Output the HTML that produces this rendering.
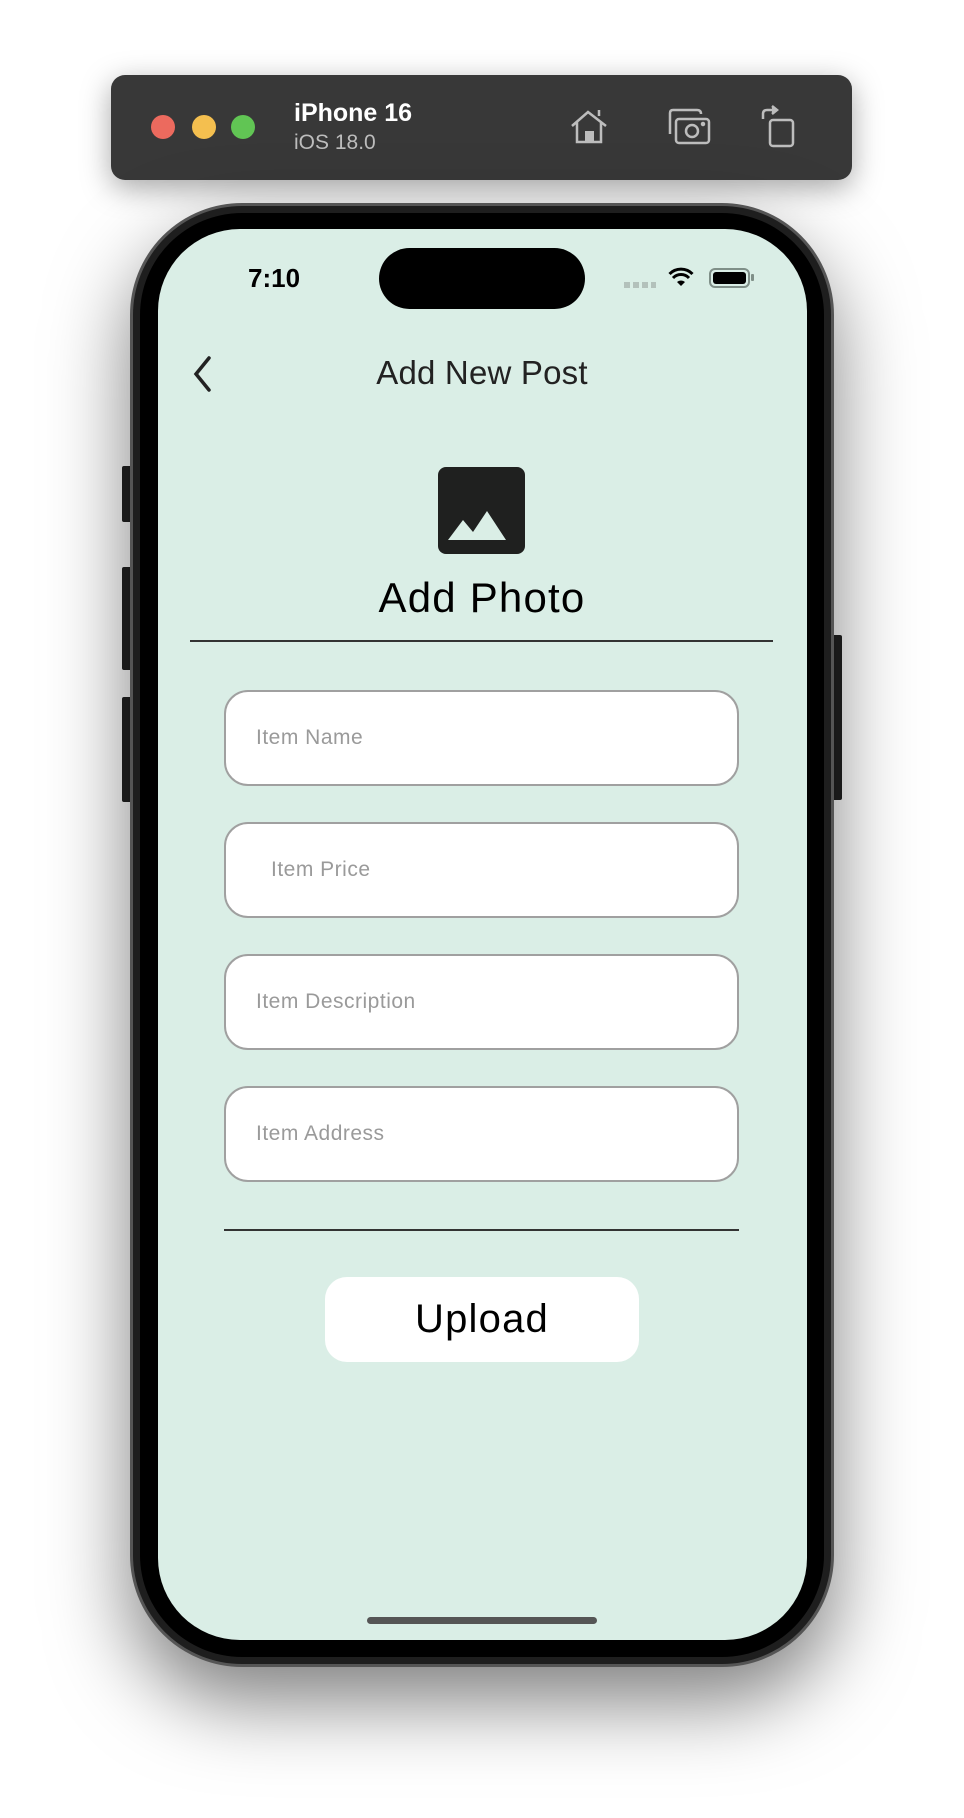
<!DOCTYPE html>
<html><head><meta charset="utf-8"><style>
*{margin:0;padding:0;box-sizing:border-box}
body{width:964px;height:1818px;background:#fff;position:relative;overflow:hidden;font-family:"Liberation Sans",sans-serif}
.abs{position:absolute}
.tb{left:111px;top:75px;width:741px;height:105px;background:#383838;border-radius:14px;box-shadow:0 8px 30px rgba(0,0,0,.35)}
.dot{width:24px;height:24px;border-radius:50%;top:115px}
.phone{left:130px;top:203px;width:704px;height:1464px;background:#1e1e1e;border-radius:112px;box-shadow:0 35px 80px rgba(0,0,0,.5);border:3px solid #555}
.bezel{left:140px;top:213px;width:684px;height:1444px;background:#000;border-radius:102px}
.screen{left:158px;top:229px;width:649px;height:1411px;background:#daeee6;border-radius:82px;overflow:hidden}
.btn{background:#222;border-radius:2px}
.inp{left:224px;width:515px;height:96px;background:#fff;border:2px solid #a0a0a0;border-radius:24px;color:#9a9a9a;font-size:21px;line-height:92px;padding-left:30px;letter-spacing:0.5px}
</style></head><body>
<div class="abs tb"></div>
<div class="abs dot" style="left:151px;background:#ec6a5e"></div>
<div class="abs dot" style="left:192px;background:#f4bf4f"></div>
<div class="abs dot" style="left:231px;background:#61c554"></div>
<div class="abs" style="left:294px;top:99px;color:#fff;font-weight:bold;font-size:25px">iPhone 16</div>
<div class="abs" style="left:294px;top:131px;color:#bdbdbd;font-size:21px">iOS 18.0</div>
<svg class="abs" style="left:568px;top:107px" width="44" height="40" viewBox="0 0 44 40" fill="none" stroke="#bdbdbd" stroke-width="2.5"><path d="M4 19 L20 5 L38 19 M9 15 V35 H33 V15 M31 9 V3"/><rect x="17" y="24" width="9" height="11" fill="#bdbdbd" stroke="none"/></svg>
<svg class="abs" style="left:667px;top:107px" width="44" height="40" viewBox="0 0 44 40" fill="none" stroke="#bdbdbd" stroke-width="2.5"><path d="M3 27 V6 Q3 3 6 3 H30 Q34 3 34 7"/><rect x="9" y="12" width="33" height="24" rx="3"/><circle cx="25" cy="24" r="6"/><circle cx="36" cy="17" r="1" fill="#bdbdbd"/></svg>
<svg class="abs" style="left:760px;top:104px" width="36" height="44" viewBox="0 0 36 44" fill="none" stroke="#bdbdbd" stroke-width="2.5"><rect x="10" y="16" width="23" height="26" rx="3"/><path d="M3 15 V10 Q3 6 7 6 H14"/><path d="M12 2 L17 6 L12 10" fill="#bdbdbd"/></svg>

<div class="abs btn" style="left:122px;top:466px;width:10px;height:56px"></div>
<div class="abs btn" style="left:122px;top:567px;width:10px;height:103px"></div>
<div class="abs btn" style="left:122px;top:697px;width:10px;height:105px"></div>
<div class="abs btn" style="left:832px;top:635px;width:10px;height:165px"></div>
<div class="abs phone"></div>
<div class="abs bezel"></div>
<div class="abs screen"></div>
<div class="abs" style="left:379px;top:248px;width:206px;height:61px;background:#000;border-radius:31px"></div>
<div class="abs" style="left:248px;top:263px;font-size:26px;font-weight:bold;color:#000">7:10</div>
<div class="abs" style="left:624px;top:282px;width:32px;height:6px;background:repeating-linear-gradient(90deg,#b3c1bb 0 6px,transparent 6px 9px)"></div>
<svg class="abs" style="left:668px;top:266px" width="26" height="22" viewBox="0 0 26 22"><path d="M13 20 L9 16 A6 6 0 0 1 17 16 Z" fill="#000"/><path d="M5 12 A11 11 0 0 1 21 12 M1.5 8 A16 16 0 0 1 24.5 8" stroke="#000" stroke-width="3" fill="none"/></svg>
<div class="abs" style="left:709px;top:268px;width:41px;height:20px;border:2px solid #7f8f88;border-radius:6px;padding:2px"><div style="width:100%;height:100%;background:#000;border-radius:3px"></div></div>
<div class="abs" style="left:751px;top:274px;width:3px;height:7px;background:#7f8f88;border-radius:1px"></div>

<svg class="abs" style="left:190px;top:355px" width="26" height="38" viewBox="0 0 26 38"><path d="M19 3 L6 19 L19 35" stroke="#222" stroke-width="3.5" fill="none" stroke-linecap="round"/></svg>
<div class="abs" style="left:282px;width:400px;top:354px;text-align:center;font-size:33px;color:#222;letter-spacing:0.2px">Add New Post</div>
<div class="abs" style="left:438px;top:467px;width:87px;height:87px;background:#1f201f;border-radius:8px"></div>
<svg class="abs" style="left:438px;top:467px" width="87" height="87" viewBox="0 0 87 87"><path d="M10 73 L25 53 L35 65 L49 44 L68 73 Z" fill="#daeee6"/></svg>
<div class="abs" style="left:282px;width:400px;top:574px;text-align:center;font-size:42px;color:#000;letter-spacing:1.2px">Add Photo</div>
<div class="abs" style="left:190px;top:640px;width:583px;height:2px;background:#333"></div>
<div class="abs inp" style="top:690px">Item Name</div>
<div class="abs inp" style="top:822px;padding-left:45px">Item Price</div>
<div class="abs inp" style="top:954px">Item Description</div>
<div class="abs inp" style="top:1086px">Item Address</div>
<div class="abs" style="left:224px;top:1229px;width:515px;height:2px;background:#333"></div>
<div class="abs" style="left:325px;top:1277px;width:314px;height:85px;background:#fff;border-radius:22px;text-align:center;line-height:85px;font-size:40px;color:#000;letter-spacing:1.2px">Upload</div>
<div class="abs" style="left:367px;top:1617px;width:230px;height:7px;background:#555;border-radius:4px"></div>
</body></html>
